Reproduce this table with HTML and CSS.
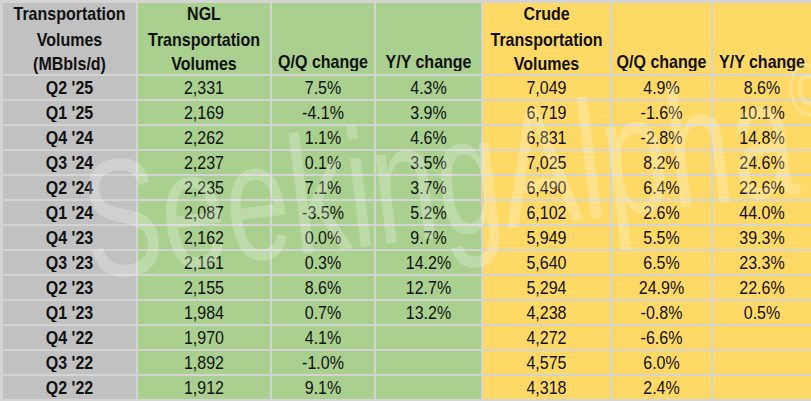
FILE: index.html
```html
<!DOCTYPE html>
<html>
<head>
<meta charset="utf-8">
<link rel="stylesheet" href="styles.css">
</head>
<body>
<div class="page">
  <div class="sheet">
    <div class="cell hd gray"><span class="t">Transportation<br>Volumes<br>(MBbls/d)</span></div>
    <div class="cell hd green"><span class="t">NGL<br>Transportation<br>Volumes</span></div>
    <div class="cell hd green"><span class="t">Q/Q change</span></div>
    <div class="cell hd green"><span class="t">Y/Y change</span></div>
    <div class="cell hd yellow"><span class="t">Crude<br>Transportation<br>Volumes</span></div>
    <div class="cell hd yellow"><span class="t">Q/Q change</span></div>
    <div class="cell hd yellow"><span class="t">Y/Y change</span></div>

    <div class="cell lbl gray"><span class="t">Q2 '25</span></div><div class="cell green"><span class="t">2,331</span></div><div class="cell green"><span class="t">7.5%</span></div><div class="cell green"><span class="t">4.3%</span></div><div class="cell yellow"><span class="t">7,049</span></div><div class="cell yellow"><span class="t">4.9%</span></div><div class="cell yellow"><span class="t">8.6%</span></div>
    <div class="cell lbl gray"><span class="t">Q1 '25</span></div><div class="cell green"><span class="t">2,169</span></div><div class="cell green"><span class="t">-4.1%</span></div><div class="cell green"><span class="t">3.9%</span></div><div class="cell yellow"><span class="t">6,719</span></div><div class="cell yellow"><span class="t">-1.6%</span></div><div class="cell yellow"><span class="t">10.1%</span></div>
    <div class="cell lbl gray"><span class="t">Q4 '24</span></div><div class="cell green"><span class="t">2,262</span></div><div class="cell green"><span class="t">1.1%</span></div><div class="cell green"><span class="t">4.6%</span></div><div class="cell yellow"><span class="t">6,831</span></div><div class="cell yellow"><span class="t">-2.8%</span></div><div class="cell yellow"><span class="t">14.8%</span></div>
    <div class="cell lbl gray"><span class="t">Q3 '24</span></div><div class="cell green"><span class="t">2,237</span></div><div class="cell green"><span class="t">0.1%</span></div><div class="cell green"><span class="t">3.5%</span></div><div class="cell yellow"><span class="t">7,025</span></div><div class="cell yellow"><span class="t">8.2%</span></div><div class="cell yellow"><span class="t">24.6%</span></div>
    <div class="cell lbl gray"><span class="t">Q2 '24</span></div><div class="cell green"><span class="t">2,235</span></div><div class="cell green"><span class="t">7.1%</span></div><div class="cell green"><span class="t">3.7%</span></div><div class="cell yellow"><span class="t">6,490</span></div><div class="cell yellow"><span class="t">6.4%</span></div><div class="cell yellow"><span class="t">22.6%</span></div>
    <div class="cell lbl gray"><span class="t">Q1 '24</span></div><div class="cell green"><span class="t">2,087</span></div><div class="cell green"><span class="t">-3.5%</span></div><div class="cell green"><span class="t">5.2%</span></div><div class="cell yellow"><span class="t">6,102</span></div><div class="cell yellow"><span class="t">2.6%</span></div><div class="cell yellow"><span class="t">44.0%</span></div>
    <div class="cell lbl gray"><span class="t">Q4 '23</span></div><div class="cell green"><span class="t">2,162</span></div><div class="cell green"><span class="t">0.0%</span></div><div class="cell green"><span class="t">9.7%</span></div><div class="cell yellow"><span class="t">5,949</span></div><div class="cell yellow"><span class="t">5.5%</span></div><div class="cell yellow"><span class="t">39.3%</span></div>
    <div class="cell lbl gray"><span class="t">Q3 '23</span></div><div class="cell green"><span class="t">2,161</span></div><div class="cell green"><span class="t">0.3%</span></div><div class="cell green"><span class="t">14.2%</span></div><div class="cell yellow"><span class="t">5,640</span></div><div class="cell yellow"><span class="t">6.5%</span></div><div class="cell yellow"><span class="t">23.3%</span></div>
    <div class="cell lbl gray"><span class="t">Q2 '23</span></div><div class="cell green"><span class="t">2,155</span></div><div class="cell green"><span class="t">8.6%</span></div><div class="cell green"><span class="t">12.7%</span></div><div class="cell yellow"><span class="t">5,294</span></div><div class="cell yellow"><span class="t">24.9%</span></div><div class="cell yellow"><span class="t">22.6%</span></div>
    <div class="cell lbl gray"><span class="t">Q1 '23</span></div><div class="cell green"><span class="t">1,984</span></div><div class="cell green"><span class="t">0.7%</span></div><div class="cell green"><span class="t">13.2%</span></div><div class="cell yellow"><span class="t">4,238</span></div><div class="cell yellow"><span class="t">-0.8%</span></div><div class="cell yellow"><span class="t">0.5%</span></div>
    <div class="cell lbl gray"><span class="t">Q4 '22</span></div><div class="cell green"><span class="t">1,970</span></div><div class="cell green"><span class="t">4.1%</span></div><div class="cell green"></div><div class="cell yellow"><span class="t">4,272</span></div><div class="cell yellow"><span class="t">-6.6%</span></div><div class="cell yellow"></div>
    <div class="cell lbl gray"><span class="t">Q3 '22</span></div><div class="cell green"><span class="t">1,892</span></div><div class="cell green"><span class="t">-1.0%</span></div><div class="cell green"></div><div class="cell yellow"><span class="t">4,575</span></div><div class="cell yellow"><span class="t">6.0%</span></div><div class="cell yellow"></div>
    <div class="cell lbl gray"><span class="t">Q2 '22</span></div><div class="cell green"><span class="t">1,912</span></div><div class="cell green"><span class="t">9.1%</span></div><div class="cell green"></div><div class="cell yellow"><span class="t">4,318</span></div><div class="cell yellow"><span class="t">2.4%</span></div><div class="cell yellow"></div>
  </div>
  <div class="watermark">SeekingAlpha<span class="copy">©</span></div>
</div>
</body>
</html>
```

FILE: styles.css
```css
html, body {
  margin: 0;
  padding: 0;
  background: #ffffff;
}

.page {
  position: relative;
  width: 811px;
  height: 401px;
  overflow: hidden;
  background: #ffffff;
}

.sheet {
  display: grid;
  grid-template-columns: 133px 132px 102px 105px 127px 99px 1fr;
  grid-template-rows: 71px repeat(13, 23px);
  gap: 2px;
  padding: 3px 0 0 3px;
  background: #d4d4d4;
  height: 401px;
  box-sizing: border-box;
  font-family: "Liberation Sans", Arial, sans-serif;
  font-size: 16px;
  color: #111111;
}

.cell {
  display: flex;
  align-items: center;
  justify-content: center;
  text-align: center;
  overflow: hidden;
}

.t {
  display: inline-block;
  transform: scaleY(1.12);
  white-space: nowrap;
}

.hd {
  align-items: flex-end;
  font-weight: bold;
  line-height: 22.5px;
  padding-bottom: 1px;
}

.lbl {
  font-weight: bold;
}

.gray { background: #c1c1c1; }
.green { background: #a9d08e; }
.yellow { background: #ffd966; }

.watermark {
  position: absolute;
  left: 94px;
  top: 190px;
  font-family: "Liberation Sans", Arial, sans-serif;
  font-size: 116px;
  line-height: 1;
  color: rgba(255, 255, 255, 0.24);
  white-space: nowrap;
  transform-origin: 0 100%;
  transform: rotate(-7deg) scaleY(1.45);
  pointer-events: none;
}

.copy {
  font-size: 52px;
  vertical-align: 52px;
}
```
